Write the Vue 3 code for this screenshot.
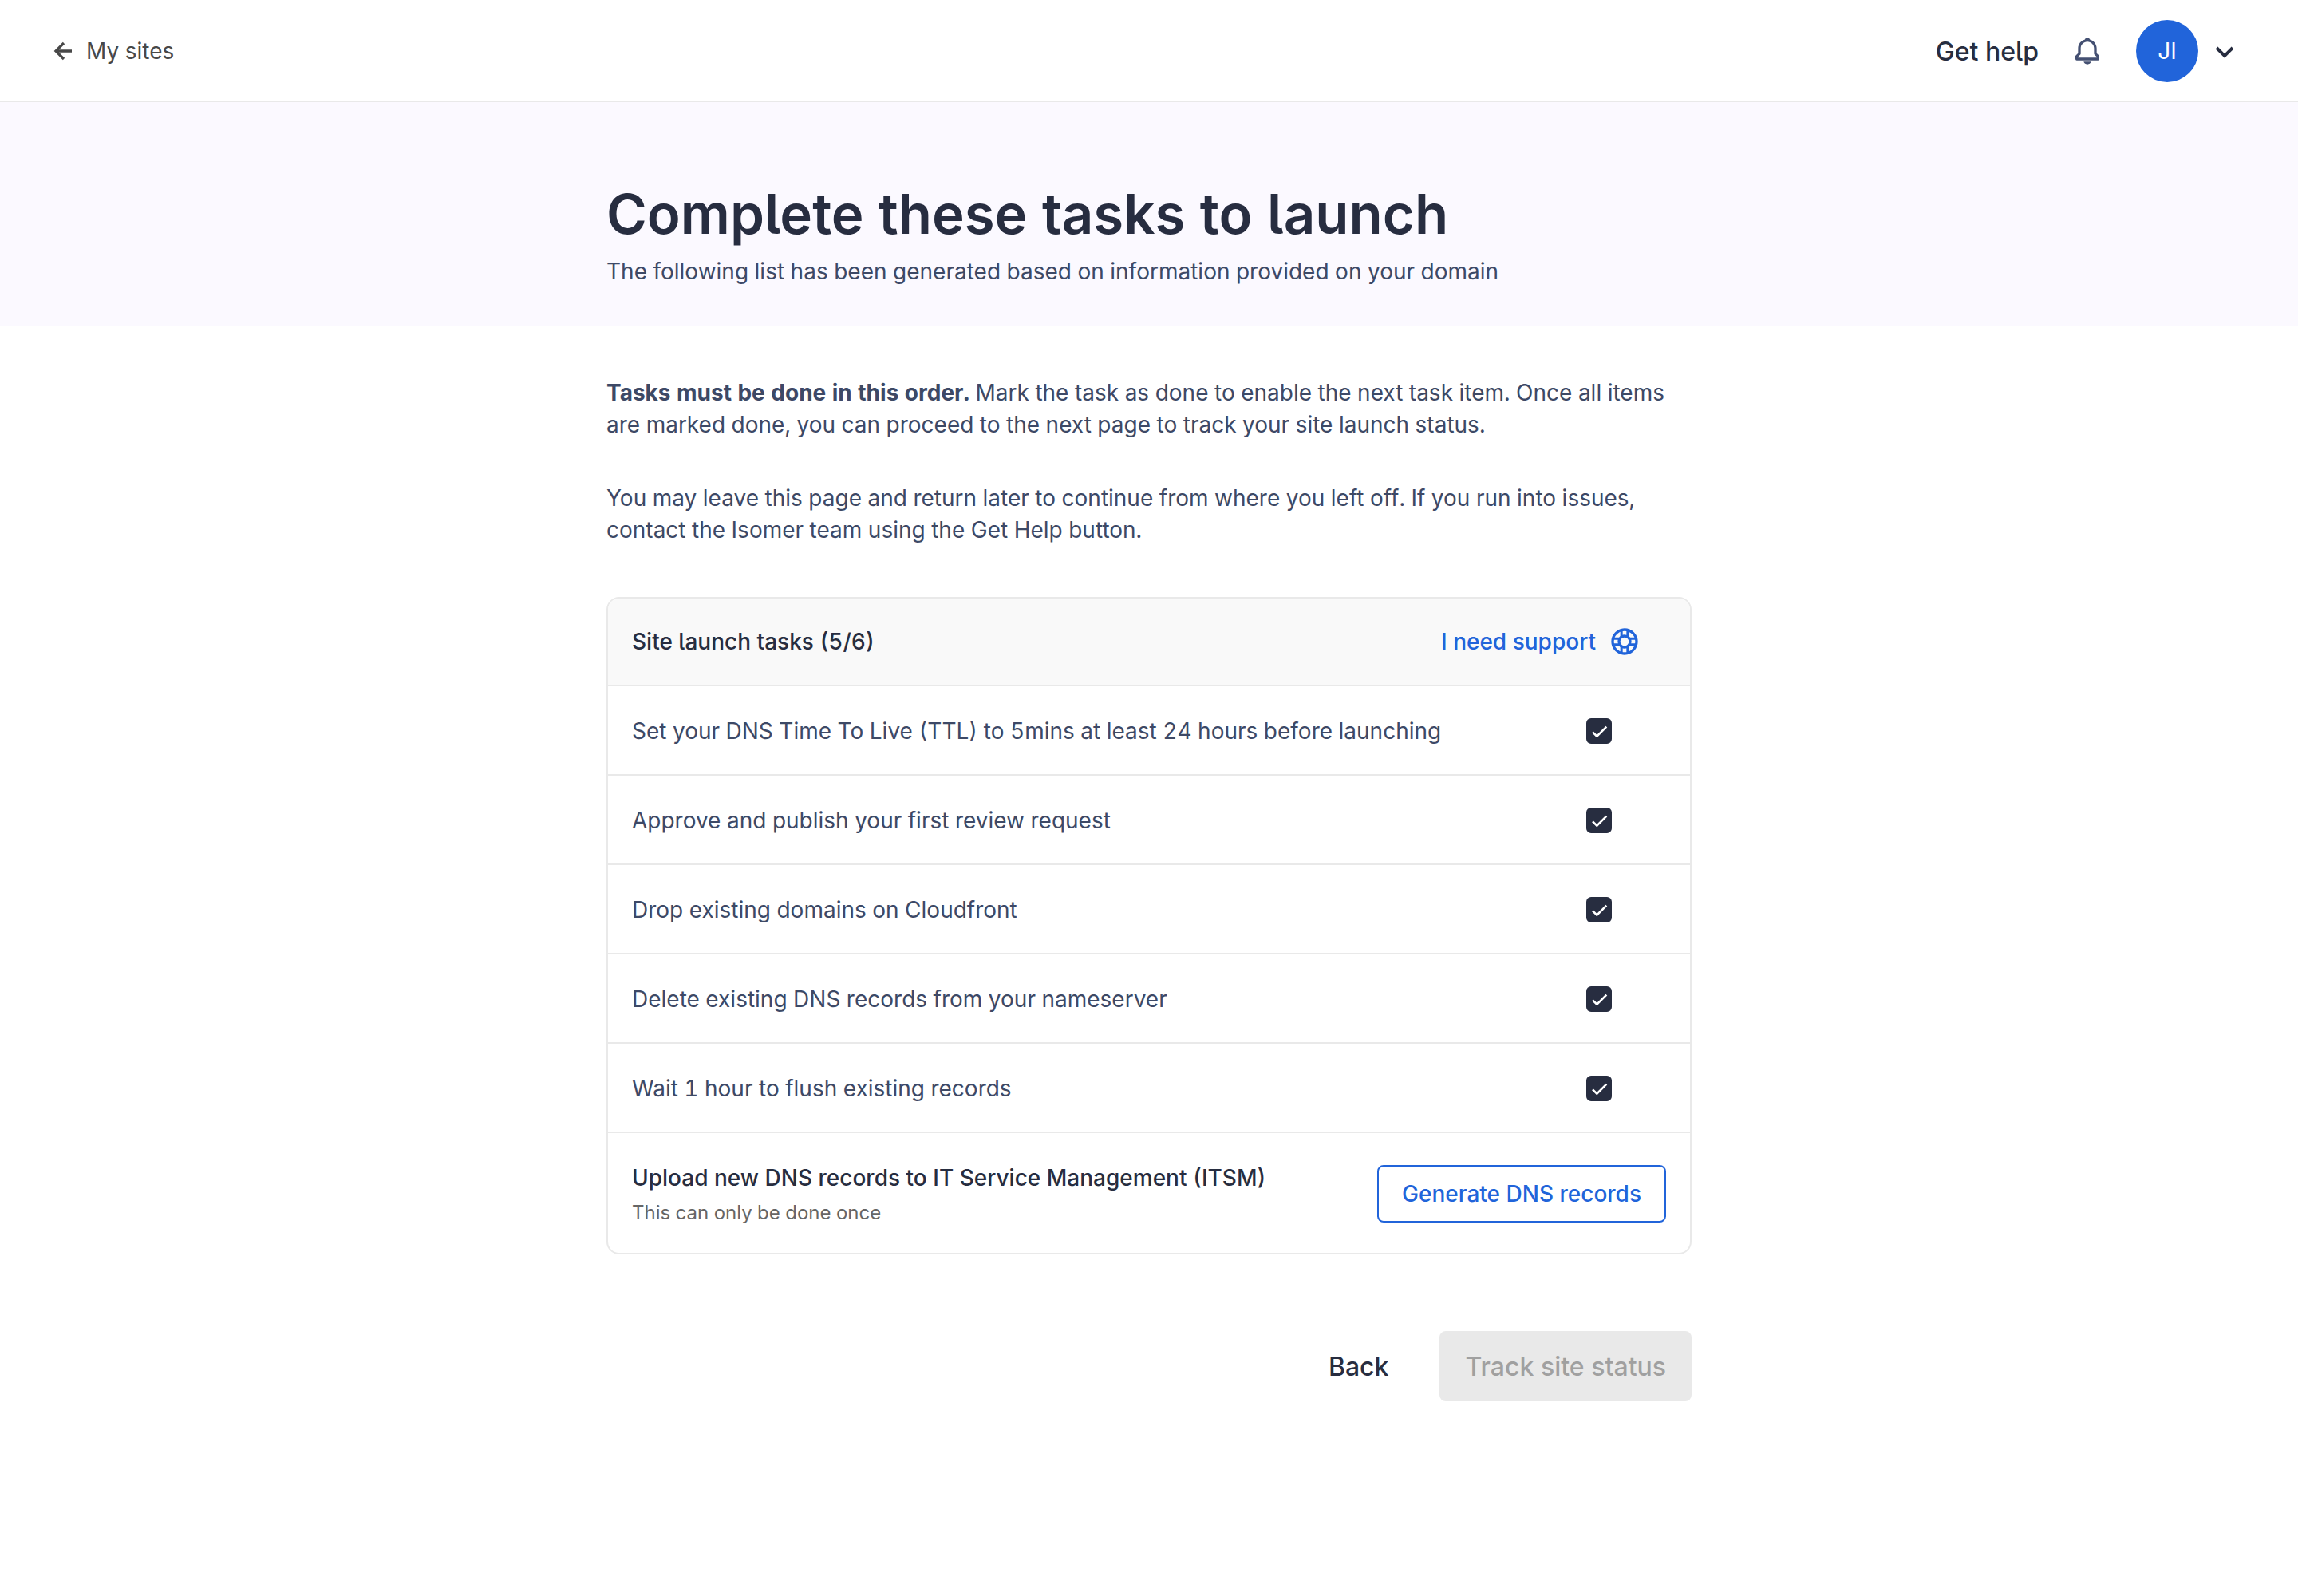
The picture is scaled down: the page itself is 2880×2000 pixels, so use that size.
<script setup>
import { computed, ref } from 'vue'

const tasks = ref([
  { id: 'ttl', label: 'Set your DNS Time To Live (TTL) to 5mins at least 24 hours before launching', done: true },
  { id: 'review', label: 'Approve and publish your first review request', done: true },
  { id: 'cloudfront', label: 'Drop existing domains on Cloudfront', done: true },
  { id: 'nameserver', label: 'Delete existing DNS records from your nameserver', done: true },
  { id: 'flush', label: 'Wait 1 hour to flush existing records', done: true },
])

const doneCount = computed(() => tasks.value.filter((task) => task.done).length)
const totalCount = computed(() => tasks.value.length + 1)
</script>

<template>
  <div class="page">
    <header class="topbar">
      <a class="back-link" href="#sites">
        <svg class="icon" viewBox="0 0 24 24" aria-hidden="true">
          <path d="M12.707 17.293 8.414 13H18v-2H8.414l4.293-4.293-1.414-1.414L4.586 12l6.707 6.707z" />
        </svg>
        My sites
      </a>
      <nav class="actions">
        <a class="help-link" href="#help">Get help</a>
        <button class="icon-button bell" type="button" aria-label="Notifications">
          <svg class="icon" viewBox="0 0 24 24" aria-hidden="true">
            <path d="M19 13.586V10c0-3.217-2.185-5.927-5.145-6.742C13.562 2.52 12.846 2 12 2s-1.562.52-1.855 1.258C7.185 4.074 5 6.783 5 10v3.586l-1.707 1.707A.996.996 0 0 0 3 16v2a1 1 0 0 0 1 1h16a1 1 0 0 0 1-1v-2a.996.996 0 0 0-.293-.707L19 13.586zM19 17H5v-.586l1.707-1.707A.996.996 0 0 0 7 14v-4c0-2.757 2.243-5 5-5s5 2.243 5 5v4c0 .266.105.52.293.707L19 16.414V17zm-7 5a2.98 2.98 0 0 0 2.818-2H9.182A2.98 2.98 0 0 0 12 22z" />
          </svg>
        </button>
        <button class="icon-button account" type="button" aria-label="Account menu">
          <span class="avatar">JI</span>
          <svg class="chevron" viewBox="0 0 24 24" aria-hidden="true">
            <path d="M16.293 9.293 12 13.586 7.707 9.293l-1.414 1.414L12 16.414l5.707-5.707z" />
          </svg>
        </button>
      </nav>
    </header>

    <section class="banner">
      <div class="column">
        <h1 class="title">Complete these tasks to launch</h1>
        <p class="subtitle">The following list has been generated based on information provided on your domain</p>
      </div>
    </section>

    <main class="column content">
      <div class="intro">
        <p>
          <strong>Tasks must be done in this order.</strong> Mark the task as done to enable the next task item.
          Once all items are marked done, you can proceed to the next page to track your site launch status.
        </p>
        <p>
          You may leave this page and return later to continue from where you left off. If you run into issues,
          contact the Isomer team using the Get Help button.
        </p>
      </div>

      <section class="card">
        <div class="card-head">
          <h2 class="card-title">Site launch tasks ({{ doneCount }}/{{ totalCount }})</h2>
          <a class="support" href="#support">
            I need support
            <svg class="icon" viewBox="0 0 24 24" aria-hidden="true">
              <g fill="none" stroke="currentColor" stroke-width="2">
                <circle cx="12" cy="12" r="9" />
                <circle cx="12" cy="12" r="4.2" />
                <path stroke-width="1.8" d="M9.7 3v5.5M14.3 3v5.5M9.7 15.5V21M14.3 15.5V21M3 9.7h5.5M3 14.3h5.5M15.5 9.7H21M15.5 14.3H21" />
              </g>
            </svg>
          </a>
        </div>
        <ul class="tasks">
          <li v-for="task in tasks" :key="task.id" class="task">
            <label :for="task.id">{{ task.label }}</label>
            <input :id="task.id" v-model="task.done" class="check" type="checkbox" />
          </li>
          <li class="task current">
            <div class="task-text">
              <h3 class="task-title">Upload new DNS records to IT Service Management (ITSM)</h3>
              <p class="note">This can only be done once</p>
            </div>
            <button class="generate" type="button">Generate DNS records</button>
          </li>
        </ul>
      </section>

      <div class="footer">
        <button class="button plain" type="button">Back</button>
        <button class="button primary" type="button" disabled>Track site status</button>
      </div>
    </main>
  </div>
</template>

<style>
body {
  margin: 0;
  background: #fff;
}
</style>

<style scoped>
.page {
  min-height: 100vh;
  background: #fff;
  color: #3d4966;
  font-family: Inter, "Liberation Sans", sans-serif;
  font-size: 28px;
  font-variant-numeric: tabular-nums;
  line-height: 40px;
}

h1, h2, h3, p, ul {
  margin: 0;
  padding: 0;
}

a {
  color: inherit;
  text-decoration: none;
}

button {
  box-sizing: border-box;
  margin: 0;
  font: inherit;
  cursor: pointer;
}

svg {
  display: block;
  flex: none;
  fill: currentColor;
}

.icon {
  width: 40px;
  height: 40px;
}

.topbar {
  display: flex;
  align-items: center;
  justify-content: space-between;
  box-sizing: border-box;
  min-height: 128px;
  padding: 2px 68px 0 60px;
  border-bottom: 2px solid #e9e9e9;
}

.back-link {
  display: flex;
  align-items: center;
  gap: 8px;
  color: #484848;
}

.actions {
  display: flex;
  align-items: center;
  gap: 41px;
  color: #272d40;
}

.help-link {
  padding-top: 2px;
  font-size: 32px;
  font-weight: 500;
  font-feature-settings: "cv05";
}

.icon-button {
  display: flex;
  align-items: center;
  padding: 0;
  border: 0;
  background: none;
  color: #272d40;
}

.bell {
  color: #445072;
}

.account {
  gap: 9px;
}

.avatar {
  display: flex;
  align-items: center;
  justify-content: center;
  width: 78px;
  height: 78px;
  border-radius: 50%;
  background: #2164da;
  color: #fff;
}

.chevron {
  width: 48px;
  height: 48px;
}

.column {
  box-sizing: border-box;
  max-width: 1360px;
  margin: 0 auto;
}

.banner {
  padding: 96px 0 48px;
  background: #fbf9ff;
}

.title {
  color: #272d40;
  font-size: 69px;
  font-weight: 600;
  font-feature-settings: "cv05";
  line-height: 88px;
}

.subtitle {
  margin-top: 8px;
}

.content {
  padding: 64px 0;
}

.intro {
  display: flex;
  flex-direction: column;
  gap: 52px;
}

.intro strong {
  font-weight: 700;
}

.card {
  margin-top: 64px;
  overflow: hidden;
  border: 2px solid #e9e9e9;
  border-radius: 16px;
}

.card-head {
  display: flex;
  align-items: center;
  justify-content: space-between;
  padding: 34px 30px;
  background: #f9f9f9;
}

.card-title,
.task-title {
  color: #272d40;
  font-size: 28px;
  font-weight: 500;
}

.card-title {
  font-feature-settings: "cv05";
}

.support {
  display: flex;
  align-items: center;
  gap: 16px;
  padding-right: 32px;
  color: #2164da;
  font-weight: 500;
}

.tasks {
  list-style: none;
}

.task {
  display: flex;
  align-items: center;
  justify-content: space-between;
  padding: 36px 98px 34px 30px;
  border-top: 2px solid #e9e9e9;
}

.current {
  padding-right: 30px;
}

.check {
  flex: none;
  appearance: none;
  width: 32px;
  height: 32px;
  margin: 0;
  border: 2px solid #272d40;
  border-radius: 6px;
  cursor: pointer;
}

.check:checked {
  background: #272d40 url("data:image/svg+xml,%3Csvg xmlns='http://www.w3.org/2000/svg' viewBox='0 0 24 24'%3E%3Cpath fill='white' d='m10 15.586-3.293-3.293-1.414 1.414L10 18.414l9.707-9.707-1.414-1.414z'/%3E%3C/svg%3E") center / 32px 32px no-repeat;
}

.note {
  margin-top: 8px;
  color: #666;
  font-size: 24px;
  line-height: 32px;
}

.generate {
  height: 72px;
  padding: 0 29px;
  border: 2px solid #2164da;
  border-radius: 8px;
  background: #fff;
  color: #2164da;
  font-weight: 500;
}

.footer {
  display: flex;
  justify-content: flex-end;
  gap: 32px;
  margin-top: 96px;
}

.button {
  height: 88px;
  padding: 2px 32px 0;
  border: 0;
  border-radius: 8px;
  font-size: 32px;
  font-weight: 500;
}

.plain {
  background: none;
  color: #272d40;
}

.primary {
  background: #e9e9e9;
  color: #a0a0a0;
  cursor: default;
}
</style>
